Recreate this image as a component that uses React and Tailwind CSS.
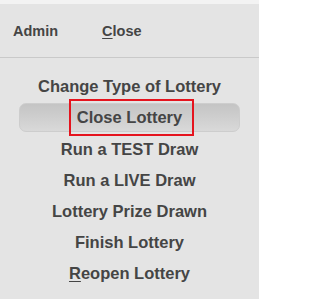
import React from "react";

export default function App() {
  return (
    <div
      className="w-[259px] h-[299px] bg-[#e4e4e4] text-[#454545] font-bold overflow-hidden"
      style={{ fontFamily: '"Liberation Sans", Arial, sans-serif' }}
    >
      <div className="h-[4px] bg-[#f3f3f3]" />
      <div className="h-[54px] border-b border-[#c9c9c9] flex items-center pt-[3px] pl-[13px] text-[14.5px]">
        <span>Admin</span>
        <span className="ml-[44px]">
          <span className="underline underline-offset-2">C</span>lose
        </span>
      </div>
      <div className="pt-[13px] flex flex-col text-[16.5px]">
        <div className="h-[31.2px] flex items-center justify-center">Change Type of Lottery</div>
        <div className="h-[31.2px] flex items-center px-[19px]">
          <div className="relative w-full h-[29px] rounded-[7px] border border-[#cdcdcd] bg-gradient-to-b from-[#c4c4c4] to-[#d9d9d9] flex items-center justify-center">
            <span>Close Lottery</span>
            <div className="absolute left-[49px] top-[-5px] w-[125px] h-[37px] border-2 border-[#e5141e]" />
          </div>
        </div>
        <div className="h-[31.2px] flex items-center justify-center">Run a TEST Draw</div>
        <div className="h-[31.2px] flex items-center justify-center">Run a LIVE Draw</div>
        <div className="h-[31.2px] flex items-center justify-center">Lottery Prize Drawn</div>
        <div className="h-[31.2px] flex items-center justify-center">Finish Lottery</div>
        <div className="h-[31.2px] flex items-center justify-center">
          <span>
            <span className="underline underline-offset-2">R</span>eopen Lottery
          </span>
        </div>
      </div>
    </div>
  );
}
